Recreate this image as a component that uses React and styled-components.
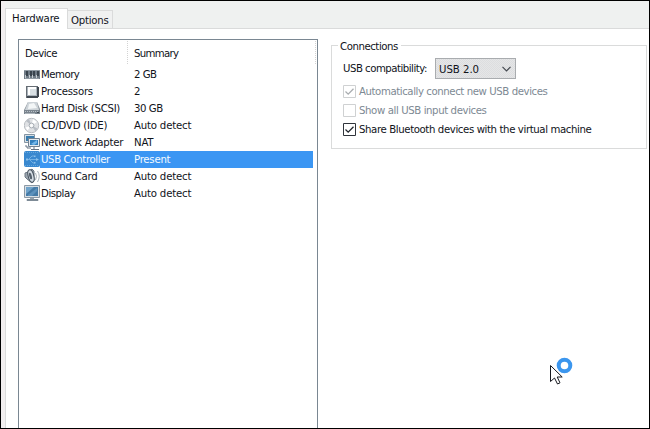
import React from 'react';
import styled, { createGlobalStyle } from 'styled-components';

const GlobalStyle = createGlobalStyle`
  * { box-sizing: border-box; }
  body { margin: 0; overflow: hidden; background: #fff; }
`;

const Window = styled.main`
  position: relative;
  width: 650px;
  height: 429px;
  padding: 7px 0 0 4px;
  overflow: hidden;
  border: 1px solid #000;
  background: linear-gradient(90deg, #f2eff0 0 4px, #eff1f0 4px);
  color: #10131a;
  font: 11.3px/17px "DejaVu Sans Condensed", "DejaVu Sans", sans-serif;
  font-stretch: condensed;
`;

const Label = styled.span`
  display: inline-block;
  white-space: nowrap;
  letter-spacing: ${({ $spacing = 0 }) => $spacing - 0.15}px;
`;

const Tabs = styled.nav`
  display: flex;
  align-items: flex-end;
  height: 20px;
`;

const Tab = styled.div`
  flex: none;
  width: ${({ $active }) => ($active ? 63 : 45)}px;
  height: ${({ $active }) => ($active ? 21 : 18)}px;
  padding: ${({ $active }) => ($active ? '1px 0 0 6px' : '1px 0 0 3px')};
  border: 1px solid #dadbdb;
  border-bottom: 0;
  border-left-width: ${({ $active }) => ($active ? 1 : 0)}px;
  background: ${({ $active }) => ($active ? '#fff' : '#f0f1f1')};
  margin-bottom: ${({ $active }) => ($active ? -1 : 0)}px;
  z-index: 1;
`;

const Page = styled.section`
  display: flex;
  align-items: flex-start;
  gap: 13px;
  width: 644px;
  height: 402px;
  padding: 10px 0 0 12px;
  border: 1px solid #dadbdb;
  border-right: 0;
  border-bottom: 0;
  background: #fff;
`;

const DeviceList = styled.div`
  flex: none;
  width: 300px;
  height: 400px;
  border: 1px solid #7a8792;
`;

const ListHeader = styled.div`
  display: grid;
  grid-template-columns: 109px 188px;
  height: 24px;
  padding-top: 1px;
  margin-bottom: 2px;
`;

const HeaderCell = styled.div`
  padding: 4px 0 0 6px;
  border-right: 1px dotted #d3d3d3;
`;

const DeviceRow = styled.div`
  display: grid;
  grid-template-columns: 16px 273px;
  height: 17px;
  padding-left: 5px;
`;

const DeviceText = styled.div`
  display: grid;
  grid-template-columns: 93px 1fr;
  padding-left: 1px;
  line-height: 17px;
  background: ${({ $selected }) => ($selected ? '#3b96f3' : 'transparent')};
  color: ${({ $selected }) => ($selected ? '#f3faff' : 'inherit')};
`;

const Icon = styled.svg`
  display: block;
  width: 17px;
  height: 17px;
`;

const Connections = styled.fieldset`
  width: 316px;
  height: 110px;
  margin: 0;
  padding: 6px 0 0 11px;
  border: 1px solid #dadbdb;
  min-width: 0;
`;

const Legend = styled.legend`
  display: flex;
  align-items: center;
  height: 13px;
  margin-left: -5px;
  padding: 1px 3px 0 2px;
  line-height: 15px;
`;

const Compatibility = styled.div`
  display: flex;
  align-items: center;
  height: 21px;
  margin-bottom: 3px;
`;

const CompatibilityLabel = styled.div`
  flex: none;
  width: 92px;
`;

const Select = styled.div`
  display: flex;
  align-items: center;
  justify-content: space-between;
  width: 81px;
  height: 21px;
  padding: 1px 4px 0 3px;
  border: 1px solid #a9acaf;
  background: repeating-conic-gradient(#dcdddf 0 25%, #e5e6e7 0 50%) 0 0 / 2px 2px;
`;

const Chevron = styled.svg`
  width: 9px;
  height: 6px;
`;

const Option = styled.div`
  display: flex;
  align-items: center;
  gap: 3px;
  height: 19px;
  color: ${({ $disabled }) => ($disabled ? '#7d8993' : '#10131a')};
`;

const CheckBox = styled.svg`
  flex: none;
  width: 13px;
  height: 13px;
  color: ${({ $disabled }) => ($disabled ? '#cfd1d2' : '#30343b')};
`;

const CheckMark = styled.path`
  stroke: ${({ $disabled }) => ($disabled ? '#a9adb0' : '#22262d')};
`;

const Pointer = styled.svg`
  position: absolute;
  left: 548px;
  top: 356px;
  width: 26px;
  height: 30px;
`;

const glyphs = {
  memory: (
    <g shapeRendering="crispEdges">
      <path fill="#6f7a85" d="M0 4h16v9H0z" />
      <path fill="#919ba4" d="M0 4h16v1H0zM1 12h14v1H1z" />
      <path fill="#39434d" d="M2 5h2v5H2zM6 5h2v5H6zM9 5h2v5H9zM13 5h2v5h-2z" />
      <path fill="#c6ccd1" d="M1 9h1v3H1zM5 9h1v3H5zM8 9h1v3H8zM12 9h1v3h-1z" />
    </g>
  ),
  cpu: (
    <g shapeRendering="crispEdges">
      <path fill="#666d74" d="M2 3h12v12H2z" />
      <path fill="#404850" d="M3 13h11v2H3zM13 4h2v10h-2z" />
      <path fill="#aab3bb" d="M3 4h10v9H3z" />
      <path fill="#fff" d="M4 4h8v8H4z" />
      <path fill="#d9e0e4" d="M6 6h6v6H6z" />
    </g>
  ),
  disk: (
    <g>
      <path d="M4 2h9l3 7v5H0v-4z" fill="#8a949c" />
      <path d="M4 2h9l2 8H1z" fill="#cdd3d8" />
      <path d="M5 4l5-1 3 5-9 1z" fill="#f3f6f7" />
      <path d="M0 10h16v4H0z" fill="#7a848e" />
      <path d="M1 11.5h14" stroke="#b9c1c7" strokeDasharray="1 1" />
      <path d="M1 13h10v1H1z" fill="#adb5bb" />
      <path d="M13 12h2v1h-2z" fill="#3b454e" />
    </g>
  ),
  disc: (
    <g>
      <circle cx="7.5" cy="8.5" r="7.2" fill="#dfe1e4" stroke="#b9bdc2" />
      <path d="M7.5 8.5L2 4l3-2zM7.5 8.5l6 3-2 3z" fill="#b9bec5" />
      <path d="M7.5 8.5L9 2l4 3zM7.5 8.5l-6 2 2 3z" fill="#fff" />
      <circle cx="7.5" cy="8.5" r="2.4" fill="#f4f5f6" stroke="#a7adb4" />
      <circle cx="7.5" cy="8.5" r="1" fill="#fff" />
    </g>
  ),
  network: (
    <g>
      <path d="M.5.5h10v8H.5z" fill="#d7dfe5" stroke="#8494a2" />
      <path d="M2 2h8v5H2z" fill="#397cae" />
      <path d="M4.5 4.5h11v8h-11z" fill="#e4eaee" stroke="#718191" />
      <path d="M6 6h8v5H6z" fill="#347fbb" />
      <path d="M7 10l6-4v3l-3 2z" fill="#73b7e9" />
      <path d="M1 12h2v2h4M10 13v2M7 15.5h8" stroke="#677584" fill="none" />
    </g>
  ),
  usb: (
    <g>
      <rect x="0" y="0" width="16" height="16" rx="2" fill="#3988cf" />
      <path d="M1 1.5h14M1 14.5h14" stroke="#65a7dd" strokeDasharray="1 1" />
      <path d="M3 8.5h10M5 8l3-3h2M6 9l3 3h2" stroke="#8bc0ea" strokeWidth=".7" fill="none" />
      <path d="M12 7l3 1.5-3 1.5zM2 7.5h2v2H2zM10 4.5h1.5V6H10zM10 11h1.5v1.5H10z" fill="#8bc0ea" />
    </g>
  ),
  sound: (
    <g>
      <path d="M1 5l3-1 4-3 2 2v10l-2 2-5-4-2-2z" fill="#9ba5af" stroke="#6e7883" />
      <ellipse cx="7" cy="8" rx="2.8" ry="6.4" transform="rotate(-14 7 8)" fill="#d4dbe3" stroke="#46515d" />
      <ellipse cx="6.5" cy="8" rx="1.3" ry="3.4" transform="rotate(-14 6.5 8)" fill="#56616d" />
      <path d="M11.5 5q2 3 0 7M13.5 3q3.5 5 0 11" fill="none" stroke="#a8b1ba" />
    </g>
  ),
  display: (
    <g>
      <path d="M.5.5h15v12H.5z" fill="#d8dfe5" stroke="#8c99a5" />
      <path d="M2 2h12v9H2z" fill="#457aa6" />
      <path d="M2 2h8L2 9z" fill="#70a3ca" />
      <path d="M4 10l9-7v3l-5 5H4z" fill="#5c91bc" />
      <path d="M6 13h4v2H6z" fill="#9ba6b1" />
      <path d="M3 14.5h11v1H3z" fill="#c6cdd3" stroke="#7e8b96" />
    </g>
  ),
};

const devices = [
  ['memory', 'Memory', '2 GB', -0.35, -0.35],
  ['cpu', 'Processors', '2', -0.08, 0],
  ['disk', 'Hard Disk (SCSI)', '30 GB', -0.13, -0.3],
  ['disc', 'CD/DVD (IDE)', 'Auto detect', -0.1, -0.04],
  ['network', 'Network Adapter', 'NAT', -0.1, 0],
  ['usb', 'USB Controller', 'Present', -0.22, -0.1],
  ['sound', 'Sound Card', 'Auto detect', -0.1, -0.04],
  ['display', 'Display', 'Auto detect', -0.3, -0.04],
];

const options = [
  { text: 'Automatically connect new USB devices', checked: true, disabled: true, spacing: -0.27 },
  { text: 'Show all USB input devices', checked: false, disabled: true, spacing: -0.25 },
  { text: 'Share Bluetooth devices with the virtual machine', checked: true, disabled: false, spacing: -0.24 },
];

export default function App() {
  return (
    <>
      <GlobalStyle />
      <Window>
        <Tabs>
          <Tab $active><Label $spacing={-0.05}>Hardware</Label></Tab>
          <Tab><Label $spacing={-0.1}>Options</Label></Tab>
        </Tabs>
        <Page>
          <DeviceList>
            <ListHeader>
              <HeaderCell><Label $spacing={-0.3}>Device</Label></HeaderCell>
              <HeaderCell><Label $spacing={-0.55}>Summary</Label></HeaderCell>
            </ListHeader>
            {devices.map(([icon, name, summary, nameSpacing, summarySpacing]) => (
              <DeviceRow key={name}>
                <Icon viewBox="0 0 17 17">{glyphs[icon]}</Icon>
                <DeviceText $selected={icon === 'usb'}>
                  <Label $spacing={nameSpacing}>{name}</Label>
                  <Label $spacing={summarySpacing}>{summary}</Label>
                </DeviceText>
              </DeviceRow>
            ))}
          </DeviceList>
          <Connections>
            <Legend><Label $spacing={-0.3}>Connections</Label></Legend>
            <Compatibility>
              <CompatibilityLabel><Label $spacing={-0.35}>USB compatibility:</Label></CompatibilityLabel>
              <Select>
                <Label $spacing={0.12}>USB 2.0</Label>
                <Chevron viewBox="0 0 9 6"><path d="M.5.8l4 4 4-4" fill="none" stroke="#444950" strokeWidth="1.2" /></Chevron>
              </Select>
            </Compatibility>
            {options.map(({ text, checked, disabled, spacing }) => (
              <Option key={text} $disabled={disabled}>
                <CheckBox viewBox="0 0 13 13" $disabled={disabled}>
                  <path d="M.5.5h12v12H.5z" fill="#fff" stroke="currentColor" />
                  {checked && <CheckMark $disabled={disabled} d="M2.5 6.5l2.7 2.7 5.3-5.4" fill="none" strokeWidth="1.3" />}
                </CheckBox>
                <Label $spacing={spacing}>{text}</Label>
              </Option>
            ))}
          </Connections>
        </Page>
        <Pointer viewBox="0 0 26 30">
          <circle cx="15.5" cy="8.5" r="5.8" fill="#fff" stroke="#3b96ee" strokeWidth="4" />
          <path d="M1.5 8.5v16l4-3.5 3 6 2.5-1.2-2.8-5.8h5z" fill="#fff" stroke="#17191f" />
        </Pointer>
      </Window>
    </>
  );
}
